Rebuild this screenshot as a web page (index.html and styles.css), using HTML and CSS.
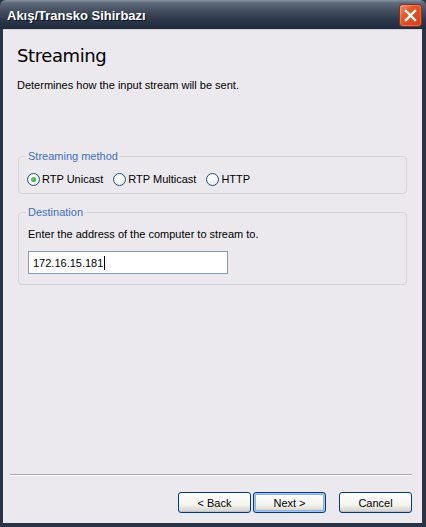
FILE: index.html
```html
<!DOCTYPE html>
<html>
<head>
<meta charset="utf-8">
<link rel="stylesheet" href="styles.css">
</head>
<body>
<div class="window">
  <div class="titlebar">
    <span class="title">Akış/Transko Sihirbazı</span>
    <span class="close"><svg width="21" height="21" viewBox="0 0 21 21"><path d="M6 6 L15 15 M15 6 L6 15" stroke="#fff" stroke-width="2.4" stroke-linecap="square"/></svg></span>
  </div>
  <div class="client">
    <div class="content">
      <h1 class="heading">Streaming</h1>
      <p class="desc">Determines how the input stream will be sent.</p>
      <fieldset class="group group-method">
        <legend>Streaming method</legend>
        <div class="radios">
          <label class="radio"><span class="dot checked"></span>RTP Unicast</label>
          <label class="radio"><span class="dot"></span>RTP Multicast</label>
          <label class="radio"><span class="dot"></span>HTTP</label>
        </div>
      </fieldset>
      <fieldset class="group group-dest">
        <legend>Destination</legend>
        <p class="hint">Enter the address of the computer to stream to.</p>
        <div class="textbox">172.16.15.181<span class="caret"></span></div>
      </fieldset>
    </div>
    <div class="footer">
      <div class="sep"></div>
      <div class="buttons">
        <span class="btn">&lt; Back</span>
        <span class="btn default">Next &gt;</span>
        <span class="btn cancel">Cancel</span>
      </div>
    </div>
  </div>
</div>
</body>
</html>
```
FILE: styles.css
```css
html, body { margin: 0; padding: 0; }
body { width: 426px; height: 527px; overflow: hidden; background: #2b3446; font-family: "Liberation Sans", Arial, sans-serif; font-size: 11px; color: #000; }
.window { width: 426px; height: 527px; display: flex; flex-direction: column; box-sizing: border-box; }
.titlebar {
  height: 29px; flex: none; display: flex; align-items: center; justify-content: space-between;
  padding: 0 5px 0 7px;
  background: linear-gradient(#8893a0 0px, #5d6978 3px, #465262 10px, #2c384a 20px, #1f2a3b 29px);
  border-radius: 6px 6px 0 0;
}
.title { color: #fff; font-family: "Liberation Sans", Arial, sans-serif; font-weight: bold; font-size: 13px; text-shadow: 1px 1px 0 #0a1020; padding-top: 2px; }
.close {
  width: 21px; height: 21px; margin-top: 2px; border-radius: 3px; display: flex;
  background: linear-gradient(135deg, #f09470 0%, #e4582c 35%, #d23c14 100%);
  box-shadow: inset 0 0 0 1px #fff3, 0 0 0 1px #8a3020;
}
.client {
  flex: 1; display: flex; flex-direction: column; background: #ebe9ed;
  margin: 0 4px 4px 3px; border-top: 1px solid #d4d0d6;
}
.content { flex: 1; padding: 0 15px 0 14px; }
.heading { margin: 14px 0 0 0; font-family: "DejaVu Sans", Verdana, sans-serif; font-weight: normal; font-size: 18px; letter-spacing: -0.4px; line-height: 24px; }
.desc { margin: 10px 0 0 0; line-height: 14px; }
.group { margin: 0 0 0 1px; border: 1px solid #d5d2d8; border-radius: 4px; padding: 0 10px; }
.group legend { color: #3f6ec0; padding: 0 2px; margin-left: -3px; line-height: 13px; }
.group-method { margin-top: 58px; padding-bottom: 7px; }
.radios { display: flex; gap: 10px; margin-top: 9px; margin-left: -2px; }
.radio { display: flex; align-items: center; gap: 2px; line-height: 14px; }
.dot { width: 11px; height: 11px; border-radius: 50%; border: 1px solid #1c5180; background: radial-gradient(circle at 40% 40%, #fff 30%, #e0dfe2 100%); display: flex; align-items: center; justify-content: center; }
.dot.checked::after { content: ""; width: 5px; height: 5px; border-radius: 50%; background: radial-gradient(circle at 40% 40%, #62d062, #21a121); }
.group-dest { margin-top: 12px; padding-bottom: 10px; }
.hint { margin: 8px 0 0 -1px; line-height: 14px; }
.textbox { margin: 10px 0 0 -1px; width: 190px; height: 21px; border: 1px solid #7f9db9; background: #fff; padding: 0 4px; display: flex; align-items: center; line-height: 14px; }
.caret { width: 1px; height: 14px; background: #000; margin-left: 1px; }
.footer { flex: none; padding: 0 10px 10px 7px; }
.sep { height: 1px; background: #aca8b0; border-bottom: 1px solid #fff; }
.buttons { display: flex; justify-content: flex-end; margin-top: 16px; gap: 2px; }
.btn {
  width: 71px; height: 19px; display: flex; align-items: center; justify-content: center;
  border: 1px solid #003c74; border-radius: 3px;
  background: linear-gradient(#ffffff 0%, #f4f4f0 60%, #d6d0c5 100%);
  box-shadow: inset 0 -1px 0 #b8c4d8, inset 0 1px 0 #fff;
}
.btn.default { box-shadow: inset 0 0 0 1px #a9c4f0, inset 0 0 0 2px #8cb0e8; }
.btn.cancel { margin-left: 11px; }
```
